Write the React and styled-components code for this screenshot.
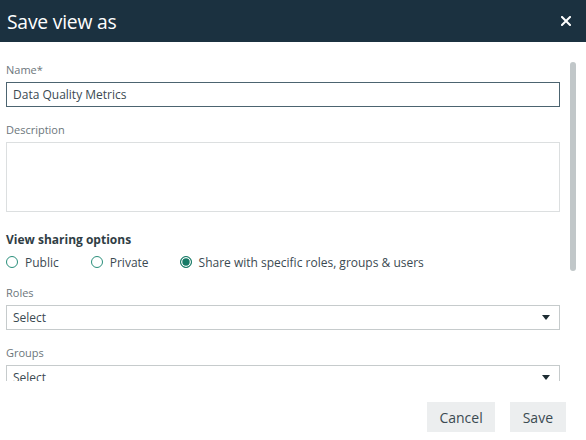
import styled, { createGlobalStyle } from "styled-components";

const GlobalStyle = createGlobalStyle`
  html, body {
    margin: 0;
    padding: 0;
    background: #ffffff;
  }
  body {
    font-family: "Open Sans", "Noto Sans", sans-serif;
    color: #3b4a52;
  }
`;

const Dialog = styled.div`
  width: 586px;
  height: 440px;
  display: flex;
  flex-direction: column;
  background: #fff;
  overflow: hidden;
`;

const Header = styled.header`
  height: 42px;
  flex: none;
  background: #1b3140;
  display: flex;
  align-items: center;
  justify-content: space-between;
  padding: 0 15px 0 7px;
  box-sizing: border-box;
`;

const Title = styled.h1`
  margin: 0;
  font-size: 19.3px;
  font-weight: 400;
  color: #ffffff;
  letter-spacing: -0.2px;
`;

const Close = styled.button`
  border: none;
  background: none;
  padding: 0;
  color: #fff;
  display: flex;
  cursor: pointer;
`;

const Body = styled.div`
  position: relative;
  height: 339px;
  flex: none;
  overflow: hidden;
  padding: 21px 26px 0 6px;
  box-sizing: border-box;
  display: flex;
  flex-direction: column;
`;

const ScrollThumb = styled.div`
  position: absolute;
  right: 10px;
  top: 20px;
  width: 6px;
  height: 209px;
  border-radius: 3px;
  background: #c1c7c9;
`;

const Field = styled.div`
  display: flex;
  flex-direction: column;
  margin-bottom: ${(p) => p.$gap || 16}px;
`;

const Label = styled.label`
  font-size: 11px;
  line-height: 14px;
  color: #6c767b;
  margin-bottom: 5px;
`;

const TextInput = styled.input`
  height: 25px;
  box-sizing: border-box;
  border: 1px solid ${(p) => (p.$focused ? "#4c6470" : "#d6dadb")};
  padding: 0 6px;
  font-family: inherit;
  font-size: 12px;
  color: #3b4a52;
  outline: none;
`;

const TextArea = styled.textarea`
  height: 70px;
  box-sizing: border-box;
  border: 1px solid #dcdfe0;
  resize: none;
  font-family: inherit;
  font-size: 12px;
  outline: none;
`;

const SectionTitle = styled.div`
  font-size: 12px;
  font-weight: 700;
  line-height: 16px;
  color: #2f3d44;
  margin: 2px 0 6px;
`;

const RadioRow = styled.div`
  display: flex;
  align-items: center;
  height: 16px;
  margin-bottom: 16px;
`;

const RadioOption = styled.label`
  display: flex;
  align-items: center;
  gap: 7px;
  font-size: 12px;
  color: #3b4a52;
  margin-right: ${(p) => p.$space}px;
`;

const RadioDot = styled.span`
  width: 12px;
  height: 12px;
  box-sizing: border-box;
  border-radius: 50%;
  border: 1.3px solid ${(p) => (p.$checked ? "#167a66" : "#2a8f7b")};
  background: ${(p) => (p.$checked ? "#167a66" : "transparent")};
  box-shadow: ${(p) => (p.$checked ? "inset 0 0 0 1.3px #fff" : "none")};
`;

const Select = styled.div`
  height: 25px;
  box-sizing: border-box;
  border: 1px solid #c6cbcc;
  display: flex;
  align-items: center;
  justify-content: space-between;
  padding: 0 9px 0 6px;
  font-size: 12px;
  color: #3b4a52;
`;

const Caret = styled.span`
  width: 0;
  height: 0;
  border-left: 4.5px solid transparent;
  border-right: 4.5px solid transparent;
  border-top: 5px solid #1e2c33;
`;

const Footer = styled.footer`
  flex: 1;
  display: flex;
  justify-content: flex-end;
  align-items: flex-start;
  gap: 15px;
  padding: 21px 20px 0 0;
`;

const Button = styled.button`
  height: 30px;
  padding: 0 ${(p) => p.$pad || 13}px;
  border: none;
  background: #eceeef;
  font-family: inherit;
  font-size: 14px;
  color: #3b4a52;
  cursor: pointer;
`;

export default function App() {
  return (
    <Dialog>
      <GlobalStyle />
      <Header>
        <Title>Save view as</Title>
        <Close aria-label="Close">
          <svg width="10" height="10" viewBox="0 0 10 10">
            <path d="M1 1L9 9M9 1L1 9" stroke="#fff" strokeWidth="2" strokeLinecap="square" />
          </svg>
        </Close>
      </Header>
      <Body>
        <ScrollThumb />
        <Field>
          <Label>Name*</Label>
          <TextInput $focused defaultValue="Data Quality Metrics" />
        </Field>
        <Field $gap={18}>
          <Label>Description</Label>
          <TextArea />
        </Field>
        <SectionTitle>View sharing options</SectionTitle>
        <RadioRow>
          <RadioOption $space={32}>
            <RadioDot />
            Public
          </RadioOption>
          <RadioOption $space={31}>
            <RadioDot />
            Private
          </RadioOption>
          <RadioOption $space={0}>
            <RadioDot $checked />
            Share with specific roles, groups &amp; users
          </RadioOption>
        </RadioRow>
        <Field>
          <Label>Roles</Label>
          <Select>
            Select
            <Caret />
          </Select>
        </Field>
        <Field>
          <Label>Groups</Label>
          <Select>
            Select
            <Caret />
          </Select>
        </Field>
      </Body>
      <Footer>
        <Button $pad={12}>Cancel</Button>
        <Button $pad={13}>Save</Button>
      </Footer>
    </Dialog>
  );
}
